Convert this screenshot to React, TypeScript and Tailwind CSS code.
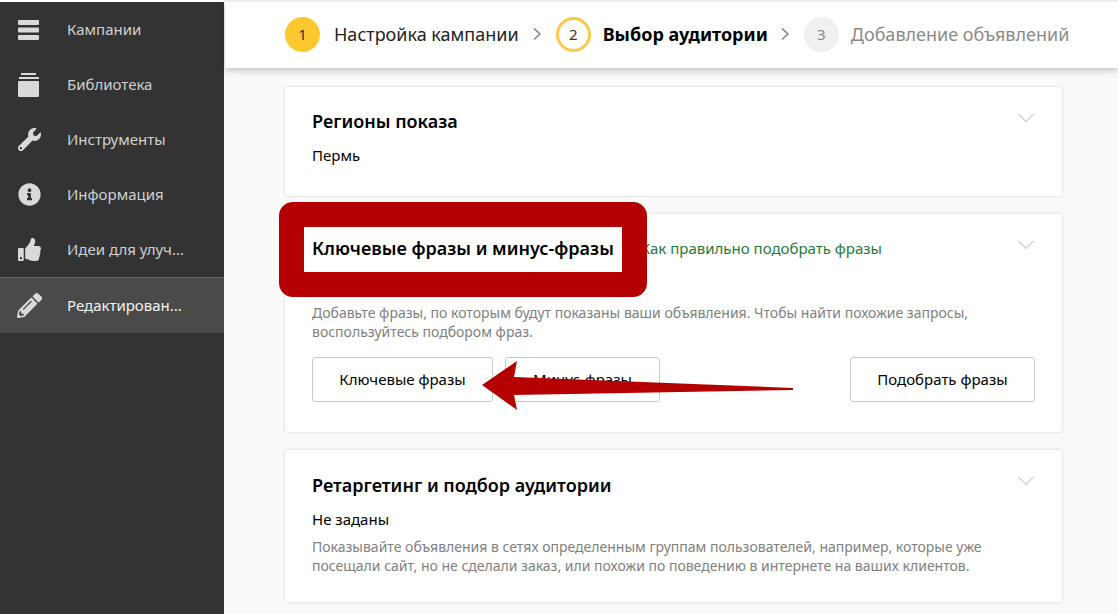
import { FaInfoCircle, FaPencilAlt, FaThumbsUp, FaWrench } from "react-icons/fa"

function BarsIcon() {
  return (
    <svg width="22" height="20" viewBox="0 0 22 20" fill="#d9d9d9">
      <rect x="0" y="0" width="21" height="5" rx="1" />
      <rect x="0" y="7.5" width="21" height="5" rx="1" />
      <rect x="0" y="15" width="21" height="5" rx="1" />
    </svg>
  )
}

function LibraryIcon() {
  return (
    <svg width="22" height="24" viewBox="0 0 22 24" fill="#d9d9d9">
      <rect x="3" y="0" width="15" height="2" />
      <rect x="1" y="4" width="20" height="2" />
      <rect x="0" y="8" width="21" height="16" rx="1" />
    </svg>
  )
}

function Chevron() {
  return (
    <svg width="16" height="10" viewBox="0 0 16 10" fill="none" stroke="#d4d4d4" strokeWidth="1.4" className="absolute top-[26px] right-[28px]">
      <path d="M0.5 1 L8 8.5 L15.5 1" />
    </svg>
  )
}

function Arrow() {
  return (
    <svg width="16" height="14" viewBox="0 0 16 14" fill="none" stroke="#777" strokeWidth="1.3">
      <path d="M5 1.5 L11 7 L5 12.5" />
    </svg>
  )
}

const menuItems = [
  { label: "Кампании", icon: <BarsIcon /> },
  { label: "Библиотека", icon: <LibraryIcon /> },
  { label: "Инструменты", icon: <FaWrench size={23} color="#d9d9d9" /> },
  { label: "Информация", icon: <FaInfoCircle size={23} color="#d9d9d9" /> },
  { label: "Идеи для улуч...", icon: <FaThumbsUp size={23} color="#d9d9d9" /> },
]

function App() {
  return (
    <div className="relative flex h-[614px] w-[1118px] overflow-hidden bg-white font-['Noto_Sans',sans-serif] text-black">
      <aside className="mt-[2px] flex w-[224px] shrink-0 flex-col bg-[#333333]">
        {menuItems.map((item) => (
          <div key={item.label} className="flex h-[55px] items-center text-[15px] text-[#d0d0d0]">
            <div className="flex w-[67px] justify-center pr-[9px]">{item.icon}</div>
            <span>{item.label}</span>
          </div>
        ))}
        <div className="flex h-[56px] items-center border-t border-[#666666] bg-[#4a4a4a] text-[15px] text-[#f2f2f2]">
          <div className="flex w-[67px] justify-center pr-[9px]">
            <FaPencilAlt size={25} color="#d9d9d9" />
          </div>
          <span>Редактирован...</span>
        </div>
      </aside>

      <main className="flex min-w-0 flex-1 flex-col bg-[#fafafa]">
        <header className="z-10 ml-px mt-[2px] flex h-[66px] shrink-0 items-center bg-white pb-[2px] pl-[60px] shadow-[0_2px_8px_rgba(0,0,0,0.25)]">
          <span className="flex h-[35px] w-[35px] items-center justify-center rounded-full bg-[#fdc82e] text-[15px] text-[#333]">1</span>
          <span className="ml-[14px] text-[18px] text-[#222]">Настройка кампании</span>
          <span className="ml-[10px] mr-[11px]"><Arrow /></span>
          <span className="flex h-[35px] w-[35px] items-center justify-center rounded-full border-[3px] border-[#fdc84a] text-[15px] text-[#333]">2</span>
          <span className="ml-[12px] text-[18px] font-bold text-black">Выбор аудитории</span>
          <span className="ml-[9px] mr-[11px]"><Arrow /></span>
          <span className="flex h-[35px] w-[35px] items-center justify-center rounded-full bg-[#f0f0f0] text-[15px] text-[#888]">3</span>
          <span className="ml-[12px] text-[18px] text-[#8a8a8a]">Добавление объявлений</span>
        </header>

        <div className="ml-[61px] mt-[19px] flex w-[777px] flex-col gap-[18px]">
          <section className="relative h-[109px] rounded-[3px] bg-white px-[27px] pt-[21px] shadow-[0_0_3px_rgba(0,0,0,0.18)]">
            <h2 className="text-[18px] font-semibold leading-[26px]">Регионы показа</h2>
            <p className="mt-[11px] text-[15px] leading-[20px]">Пермь</p>
            <Chevron />
          </section>

          <section className="relative h-[218px] rounded-[3px] bg-white px-[27px] pt-[21px] shadow-[0_0_3px_rgba(0,0,0,0.18)]">
            <div className="flex items-center">
              <h2 className="text-[18px] font-semibold leading-[26px]">Ключевые фразы и минус-фразы</h2>
              <span className="ml-[8px] text-[15px] text-[#1f7a3c]">— Как правильно подобрать фразы</span>
            </div>
            <p className="mt-[42px] w-[700px] text-[14px] leading-[19px] text-[#808080]">
              Добавьте фразы, по которым будут показаны ваши объявления. Чтобы найти похожие запросы, воспользуйтесь подбором фраз.
            </p>
            <div className="mt-[16px] flex">
              <button className="h-[45px] w-[181px] rounded-[3px] border border-[#c9c9c9] bg-white text-[15px]">Ключевые фразы</button>
              <button className="ml-[12px] h-[45px] w-[155px] rounded-[3px] border border-[#c9c9c9] bg-white text-[15px]">Минус-фразы</button>
              <button className="ml-auto mr-[0px] h-[45px] w-[185px] rounded-[3px] border border-[#c9c9c9] bg-white text-[15px]">Подобрать фразы</button>
            </div>
            <Chevron />
          </section>

          <section className="relative h-[152px] rounded-[3px] bg-white px-[27px] pt-[22px] shadow-[0_0_3px_rgba(0,0,0,0.18)]">
            <h2 className="text-[18px] font-semibold leading-[26px]">Ретаргетинг и подбор аудитории</h2>
            <p className="mt-[11px] text-[15px] leading-[20px]">Не заданы</p>
            <p className="mt-[8px] w-[720px] text-[14px] leading-[19px] text-[#808080]">
              Показывайте объявления в сетях определенным группам пользователей, например, которые уже посещали сайт, но не сделали заказ, или похожи по поведению в интернете на ваших клиентов.
            </p>
            <Chevron />
          </section>
        </div>
      </main>

      {/* red annotation over the screenshot */}
      <div className="absolute left-[279px] top-[202px] h-[95px] w-[368px] rounded-[14px] border-[25px] border-[#b50000]" />
      <svg className="absolute left-[478px] top-[358px]" width="320" height="56" viewBox="0 0 320 56" fill="#b50000">
        <path d="M4 27 L39 3 L36 19 L315 30 L315 32 L36 37 L39 52 Z" />
      </svg>
    </div>
  )
}

export default App
